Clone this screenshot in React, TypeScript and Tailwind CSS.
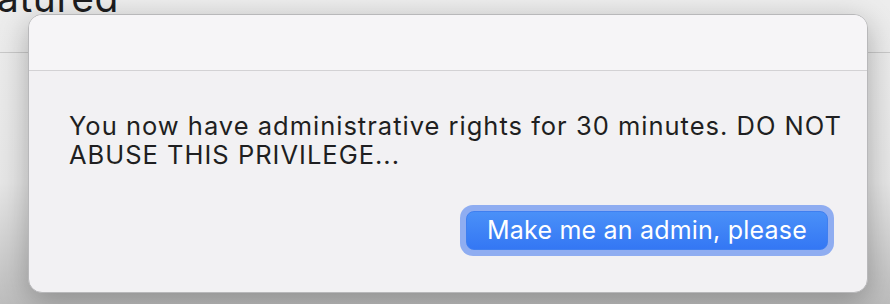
import React from "react";

export default function App() {
  return (
    <div
      className="relative w-[890px] h-[304px] overflow-hidden bg-[linear-gradient(to_bottom,#ededed_0%,#e6e6e6_60%,#bdbdbd_100%)]"
      style={{ fontFamily: "Inter, 'Noto Sans', sans-serif" }}
    >
      {/* background window content */}
      <div className="absolute left-[-3px] top-[-22px] text-[39px] leading-none text-[#1d1d1f] tracking-[0.6px]">
        atured
      </div>
      <div className="absolute left-0 right-0 top-[52px] h-px bg-[#c9c9c9]" />

      {/* sheet dialog */}
      <div className="absolute left-[28px] top-[14px] w-[840px] h-[279px] rounded-[14px] border border-[#b8b8ba] bg-[#f2f1f3] shadow-[0_8px_30px_rgba(0,0,0,0.28)] overflow-hidden flex flex-col">
        <div className="h-[56px] bg-[#f6f5f7] border-b border-[#d3d2d4]" />
        <div className="flex-1 flex flex-col pt-[40px]">
          <p className="pl-[40px] text-[25.5px] leading-[29px] text-[#1f1f21] tracking-[1px] whitespace-nowrap">
            You now have administrative rights for 30 minutes. DO NOT
            <br />
            ABUSE THIS PRIVILEGE...
          </p>
          <div className="flex justify-end mt-[36px] pr-[33px]">
            <div className="rounded-[13px] bg-[#8fadf1] p-[6px]">
              <button className="h-[39px] w-[362px] rounded-[8px] bg-[linear-gradient(to_bottom,#4a90f8,#3477f4)] border border-[#3f7ff0] text-white text-[25px] leading-none tracking-[0.2px] flex items-center justify-center">
                Make me an admin, please
              </button>
            </div>
          </div>
        </div>
      </div>
    </div>
  );
}
